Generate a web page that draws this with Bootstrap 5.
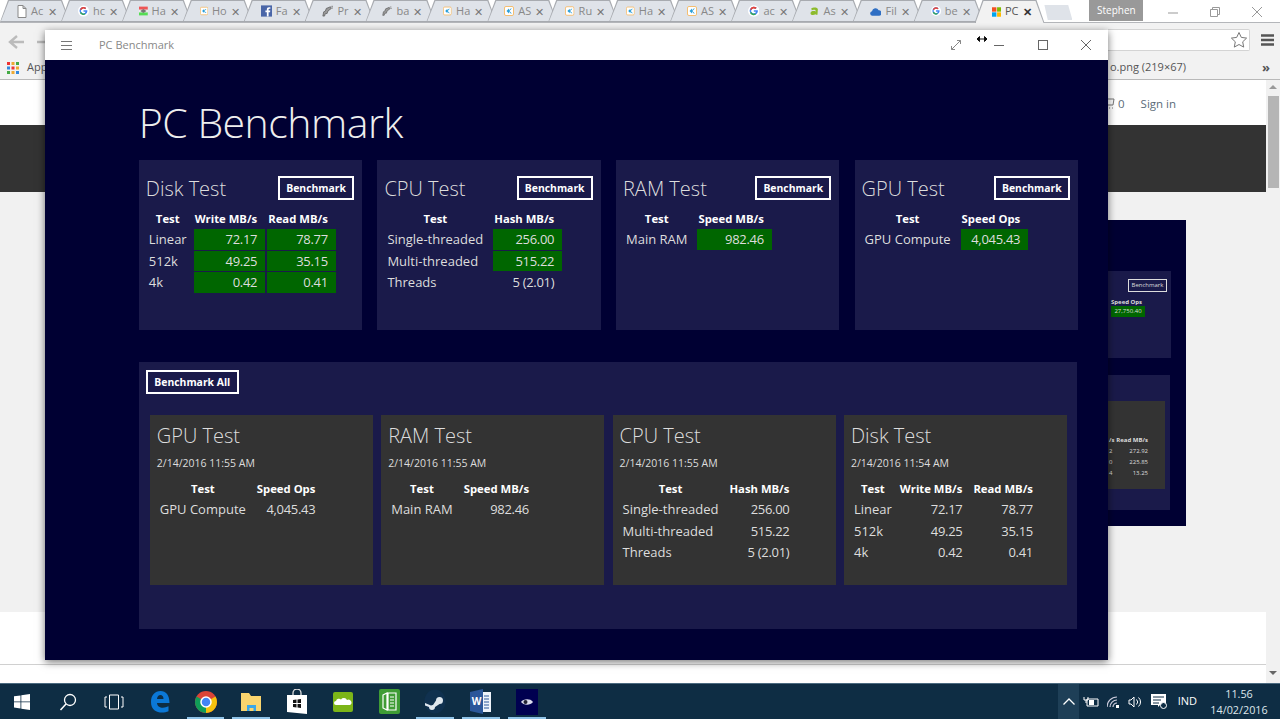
<!DOCTYPE html>
<html lang="en">
<head>
<meta charset="UTF-8">
<title>PC Benchmark</title>
<link href="https://cdn.jsdelivr.net/npm/bootstrap@5.3.3/dist/css/bootstrap.min.css" rel="stylesheet">
<style>
  html, body { height: 100%; margin: 0; overflow: hidden; background: #fff; font-family: "Open Sans", "Noto Sans", sans-serif; }
  .desk { width: 1280px; height: 719px; position: relative; overflow: hidden; }

  /* browser behind */
  .tabstrip { height: 23px; background: #fff; border-bottom: 1px solid #b4b6ba; }
  .tabby { width: 70px; margin-right: -9.1px; height: 22px; flex: none; position: relative; z-index: 0; background: #a8abb0; clip-path: polygon(8px 0, calc(100% - 8px) 0, 100% 100%, 0 100%); padding: 0 13px 0 17px; color: #888; font-size: 11px; gap: 4px; }
  .tabby::before { content: ""; position: absolute; inset: 1px 1px 1px 1px; z-index: -1; background: #dfe3e9; clip-path: polygon(8px 0, calc(100% - 8px) 0, 100% 100%, 0 100%); }
  .tabby .shut { font-size: 11px; line-height: 1; color: #777; margin-left: auto; }
  .tabby.on { color: #555; height: 23px; z-index: 1; }
  .tabby.on::before { background: #f2f2f2; bottom: 0; }
  .tabby.on .shut { color: #333; font-weight: 700; }
  .newtab { width: 28px; height: 15px; margin-left: 9px; margin-top: 5px; flex: none; background: #dfe3e9; clip-path: polygon(0 0, 85% 0, 100% 100%, 12% 100%); }
  .who { width: 54px; height: 21px; flex: none; background: #999; color: #fff; font-size: 10px; margin-left: 17px; }
  .winbtns { margin-left: auto; padding: 7px 2px 0 0; }
  .winbtns svg { display: block; margin: 0 16px; }
  .tools { height: 33px; background: #f2f2f2; padding: 0 0 0 1108px; }
  .omni { width: 142px; height: 22px; background: #fff; border: 1px solid #d4d4d4; border-left: 0; border-radius: 0 2px 2px 0; justify-content: flex-end; padding-right: 1px; }
  .omnimenu { margin-left: 11px; }
  .marks { height: 24px; background: #f2f2f2; border-bottom: 1px solid #b9b9b9; font-size: 11px; color: #555; padding-left: 7px; }
  .marks .dimtxt { margin-left: auto; margin-right: 76px; }
  .marks .more { margin-right: 10px; font-weight: 700; font-size: 13px; }
  .gopher { position: absolute; left: 0; top: 28px; padding-left: 3px; color: #ccc; }
  .pagearea { flex: 1; position: relative; background: #fff; }
  .pagetop { height: 45px; font-size: 11.5px; color: #5a6b78; padding: 3px 0 0 1107px; }
  .pagetop svg { margin-right: 3px; }
  .pagetop span + span { margin-left: 16px; }
  .pageband { height: 67px; background: #333; }
  .pagebody { height: 420px; background: #f1f1f1; }
  .pagefoot { height: 53px; background: #fff; border-bottom: 1px solid #d0d0d0; }
  .scroller { position: absolute; right: 0; top: 0; bottom: 0; width: 14px; background: #f1f1f1; }
  .scroller i { display: block; position: absolute; left: 2px; right: 1px; top: 16px; height: 92px; background: #b5b5b5; }
  .scroller b { position: absolute; left: 3px; border: 4px solid transparent; }
  .scroller .sup { top: 1px; border-bottom-color: #999; }
  .scroller .sdn { bottom: 4px; border-top-color: #666; }
  .thumbshot { position: absolute; left: 1050px; top: 140px; width: 136px; height: 306px; background: #003; color: #ddd; font-size: 6px; font-weight: 700; }
  .thumbshot .p1 { position: absolute; left: 0; top: 51px; width: 121px; height: 87px; background: #1a1a4a; }
  .thumbshot .p2 { position: absolute; left: 0; top: 155px; width: 120px; height: 135px; background: #1a1a4a; }
  .thumbshot .p3 { position: absolute; left: 0; top: 181px; width: 115px; height: 88px; background: #333; }
  .thumbshot .tb { position: absolute; left: 78px; top: 59px; width: 39px; height: 13px; border: 1px solid #ddd; text-align: center; line-height: 11px; font-weight: 400; }
  .thumbshot .sp { position: absolute; left: 61px; top: 78px; }
  .thumbshot .gr { position: absolute; left: 61px; top: 86px; width: 34px; height: 11px; line-height: 11px; background: #060; text-align: center; font-weight: 400; }
  .thumbshot .rd { position: absolute; top: 215px; right: 38px; text-align: right; line-height: 11px; font-weight: 400; }
  .thumbshot .rd b { display: block; }
  .thumbshot .rl { position: absolute; top: 215px; left: 59px; line-height: 11px; font-weight: 400; }

  /* taskbar */
  .taskbar { height: 36px; background: #0e2d44; border-top: 1px solid #4b6a80; color: #fff; position: relative; }
  .tskico { width: 45.9px; height: 35px; flex: none; position: relative; }
  .tskico:first-child { margin-left: -1px; }
  .tskico.live::after { content: ""; position: absolute; left: 4px; right: 4px; bottom: 0; height: 2px; background: #8fc3e8; }
  .tray { margin-left: auto; font-size: 11px; padding-right: 11px; }
  .tray svg { margin-left: 7.5px; flex: none; }
  .trayup { width: 21px; height: 35px; background: #1e3f57; margin-right: -3.500px; }
  .trayup svg { margin-left: 0; }
  .trayind { margin-left: 11px; }
  .clock { width: 60px; font-size: 10.8px; line-height: 16px; text-align: center; color: #dfe6eb; margin-left: 12px; }

  /* app window */
  .appwin { position: absolute; left: 45px; top: 30px; width: 1063px; height: 630px; box-shadow: 0 2px 8px rgba(0,0,0,.55); background: #003; }
  .appbar { height: 30px; background: #fff; color: #888; font-size: 11px; position: relative; }
  .burger { margin-left: 16px; margin-right: 27px; }
  .appctl { margin-left: auto; }
  .appctl .gapa { margin-left: 33px; }
  .appctl .gapb { margin-left: 34px; }
  .appctl .gapc { margin-left: 33px; margin-right: 17px; }
  .resizecur { position: absolute; left: 932px; top: 4px; }
  .appbody { padding: 37px 0 0 93.8px; height: 600px; color: #ddd; }
  .apphead { font-size: 41px; font-weight: 300; line-height: 50px; margin: 0 0 13px; color: #eee; letter-spacing: -.5px; }
  .quad { display: grid; }
  .toprow { grid-template-columns: repeat(4, 223.3px); column-gap: 15.3px; }
  .lowrow { grid-template-columns: repeat(4, 223px); column-gap: 8.4px; margin-left: 4px; margin-top: 21px; }
  .tile { height: 170px; background: #1a1a4a; padding: 16px 8px 0 7px; }
  .tile.gray { background: #333; padding-top: 8px; }
  .tilehd { font-size: 20px; font-weight: 300; line-height: 26px; margin: 0; color: #ddd; }
  .stamp { font-size: 10.5px; line-height: 16px; margin-top: 6px; color: #ddd; }
  .btnbench { display: block; border: 2px solid #fff; border-radius: 0; color: #fff; background: transparent; font-size: 10.4px; font-weight: 700; line-height: 20px; padding: 0 6px; width: 76px; white-space: nowrap; }
  .allwrap { width: 938px; height: 267px; background: #1a1a4a; margin-top: 32px; padding: 8px 0 0 7px; }
  .allwrap .btnbench { width: 93px; }
  .benchtbl { border-collapse: separate; border-spacing: 2px 1px; margin: 6px 0 0 -1px; font-size: 13px; line-height: 20.5px; color: #ddd; }
  .gray .benchtbl { margin-top: 7px; }
  .benchtbl th { font-size: 11.3px; font-weight: 700; color: #fff; text-align: center; line-height: 19px; padding: 0 8px 0 1px; white-space: nowrap; }
  .benchtbl td { padding: 0 8px 0 1px; white-space: nowrap; }
  .benchtbl th:first-child, .benchtbl td:first-child { padding-left: 2px; }
  .benchtbl.disktbl th:first-child, .benchtbl.disktbl td:first-child { padding-right: 5px; }
  .benchtbl td.num { text-align: right; letter-spacing: -.3px; }
  .benchtbl td.ok { background: #060; }
</style>
</head>
<body>
<svg width="0" height="0" class="position-absolute">
  <symbol id="kico" viewBox="0 0 14 14"><rect x=".7" y=".7" width="12.6" height="12.6" rx="2" fill="#fff" stroke="#f5b55a" stroke-width="1.2"/><path d="M7 3.500 3.500 7 7 10.500V8l2.500 2.500h1.500L7.500 7 11 3.500H9.500L7 6z" fill="#2a9fd8"/></symbol>
  <symbol id="gico" viewBox="0 0 14 14"><circle cx="7" cy="7" r="7" fill="#fff"/><path d="M11.800 6H7v2h2.700A3 3 0 1 1 9 4.700l1.500-1.500A5 5 0 1 0 12 7z" fill="#4285f4"/><path d="M2.500 4.800A5 5 0 0 1 10.500 3.200L9 4.700A3 3 0 0 0 4.300 5.700z" fill="#ea4335"/><path d="M2.300 9.200A5 5 0 0 0 9.500 11.300L8.500 9.800A3 3 0 0 1 4.300 8.500z" fill="#34a853"/></symbol>
  <symbol id="wico" viewBox="0 0 14 14"><path d="M1 13l1-5 2-1 1-3 5-2 1 2-4 3-1 3H4l-1 3z" fill="#999" stroke="#555" stroke-width=".8"/><path d="M11 1.500h2M11.500 3.500h2" stroke="#777"/></symbol>
</svg>
<div class="desk d-flex flex-column">
  <div class="tabstrip d-flex align-items-start">
    <div class="tabby d-flex align-items-center"><svg width="10" height="13" viewBox="0 0 10 13"><path d="M1 .5h5l3 3v9H1zM6 .5v3h3" fill="#fff" stroke="#888"/></svg><span>Ac</span><span class="shut">✕</span></div>
    <div class="tabby d-flex align-items-center"><svg width="14" height="14"><use href="#gico"/></svg><span>hc</span><span class="shut">✕</span></div>
    <div class="tabby d-flex align-items-center"><svg width="14" height="14" viewBox="0 0 14 14"><rect width="14" height="5" fill="#e55"/><rect y="9" width="14" height="5" fill="#5d5"/><rect y="5" width="14" height="4" fill="#eee"/><path d="M2 7l5-3 5 3-5 3z" fill="#777"/></svg><span>Ha</span><span class="shut">✕</span></div>
    <div class="tabby d-flex align-items-center"><svg width="14" height="14"><use href="#kico"/></svg><span>Ho</span><span class="shut">✕</span></div>
    <div class="tabby d-flex align-items-center"><svg width="14" height="14" viewBox="0 0 14 14"><rect width="14" height="14" fill="#4a66a8"/><path d="M9.500 14V8.500h1.800l.3-2H9.500V5.200c0-.6.2-1 1-1h1.200V2.400H10C8.200 2.400 7.300 3.400 7.300 5v1.500H5.500v2h1.800V14z" fill="#fff"/></svg><span>Fa</span><span class="shut">✕</span></div>
    <div class="tabby d-flex align-items-center"><svg width="14" height="14"><use href="#wico"/></svg><span>Pr</span><span class="shut">✕</span></div>
    <div class="tabby d-flex align-items-center"><svg width="14" height="14"><use href="#wico"/></svg><span>ba</span><span class="shut">✕</span></div>
    <div class="tabby d-flex align-items-center"><svg width="14" height="14"><use href="#kico"/></svg><span>Ha</span><span class="shut">✕</span></div>
    <div class="tabby d-flex align-items-center"><svg width="14" height="14"><use href="#kico"/></svg><span>AS</span><span class="shut">✕</span></div>
    <div class="tabby d-flex align-items-center"><svg width="14" height="14"><use href="#kico"/></svg><span>Ru</span><span class="shut">✕</span></div>
    <div class="tabby d-flex align-items-center"><svg width="14" height="14"><use href="#kico"/></svg><span>Ha</span><span class="shut">✕</span></div>
    <div class="tabby d-flex align-items-center"><svg width="14" height="14"><use href="#kico"/></svg><span>AS</span><span class="shut">✕</span></div>
    <div class="tabby d-flex align-items-center"><svg width="14" height="14"><use href="#gico"/></svg><span>ac</span><span class="shut">✕</span></div>
    <div class="tabby d-flex align-items-center"><svg width="14" height="14" viewBox="0 0 14 14"><path d="M3 3.500c2-1.500 8-2 8.500 1L11 12H8.500l.2-1C6 13 1.500 12.500 2 9.500 2.500 6.500 6.500 7 9 7.500 9 4.500 5 5 3.500 6z" fill="#8dbb2c"/></svg><span>As</span><span class="shut">✕</span></div>
    <div class="tabby d-flex align-items-center"><svg width="15" height="11" viewBox="0 0 15 11"><path d="M3 11a3 3 0 0 1-.5-5.900A4.500 4.500 0 0 1 11 4a3.500 3.500 0 0 1 .5 7z" fill="#2f6fc4"/></svg><span>Fil</span><span class="shut">✕</span></div>
    <div class="tabby d-flex align-items-center"><svg width="14" height="14"><use href="#gico"/></svg><span>be</span><span class="shut">✕</span></div>
    <div class="tabby on d-flex align-items-center"><svg width="14" height="14" viewBox="0 0 14 14"><rect width="6.500" height="6.500" fill="#f25022"/><rect x="7.500" width="6.500" height="6.500" fill="#7fba00"/><rect y="7.500" width="6.500" height="6.500" fill="#00a4ef"/><rect x="7.500" y="7.500" width="6.500" height="6.500" fill="#ffb900"/></svg><span>PC</span><span class="shut">✕</span></div>
    <div class="newtab"></div>
    <div class="who d-flex align-items-center justify-content-center">Stephen</div>
    <div class="winbtns d-flex align-items-center">
      <svg width="10" height="10" viewBox="0 0 10 10"><path d="M0 6h10" stroke="#999"/></svg>
      <svg width="10" height="10" viewBox="0 0 10 10"><path d="M.5 2.500h7v7h-7zM2.500 2.500v-2h7v7h-2" fill="none" stroke="#999"/></svg>
      <svg width="10" height="10" viewBox="0 0 10 10"><path d="M0 0l10 10M10 0L0 10" stroke="#999"/></svg>
    </div>
  </div>
  <div class="tools d-flex align-items-center">
    <div class="omni d-flex align-items-center"><svg width="18" height="18" viewBox="0 0 18 18"><path d="M9 1.500l2.300 4.900 5.300.7-3.900 3.700 1 5.300L9 13.500l-4.700 2.600 1-5.300L1.400 7.100l5.300-.7z" fill="#fff" stroke="#777"/></svg></div>
    <svg class="omnimenu" width="13" height="12" viewBox="0 0 13 12"><path d="M0 1.500h13M0 6h13M0 10.500h13" stroke="#555" stroke-width="2.400"/></svg>
  </div>
  <div class="marks d-flex align-items-center">
    <svg width="12" height="12" viewBox="0 0 12 12" class="me-2"><rect width="3" height="3" fill="#e33"/><rect x="4.500" width="3" height="3" fill="#ea3"/><rect x="9" width="3" height="3" fill="#4a4"/><rect y="4.500" width="3" height="3" fill="#38d"/><rect x="4.500" y="4.500" width="3" height="3" fill="#e33"/><rect x="9" y="4.500" width="3" height="3" fill="#ea3"/><rect y="9" width="3" height="3" fill="#4a4"/><rect x="4.500" y="9" width="3" height="3" fill="#ea3"/><rect x="9" y="9" width="3" height="3" fill="#38d"/></svg>
    <span>Apps</span>
    <span class="dimtxt">o.png (219×67)</span><span class="more">»</span>
  </div>
  <div class="gopher"><svg width="46" height="20" viewBox="0 0 46 20"><path d="M14 4L7 10l7 6M7 10h14" fill="none" stroke="#bbb" stroke-width="2.400"/><path d="M34 10h8" stroke="#bbb" stroke-width="2.400"/></svg></div>
  <div class="pagearea">
    <div class="pagetop d-flex align-items-center"><svg width="8" height="12" viewBox="0 0 8 12"><path d="M0 1h7L6 7H1M2 10h1M5 10h1" fill="none" stroke="#777"/></svg><span>0</span><span>Sign in</span></div>
    <div class="pageband"></div>
    <div class="pagebody"></div>
    <div class="pagefoot"></div>
    <div class="thumbshot">
      <div class="p1"></div><div class="p2"></div><div class="p3"></div>
      <div class="tb">Benchmark</div>
      <div class="sp">Speed Ops</div>
      <div class="gr">27,750.40</div>
      <div class="rl"><b>/s</b><br>2<br>0<br>4</div>
      <div class="rd"><b>Read MB/s</b>272.92<br>225.85<br>13.25</div>
    </div>
    <div class="scroller"><b class="sup"></b><i></i><b class="sdn"></b></div>
  </div>
  <div class="taskbar d-flex align-items-center">
    <div class="tskico d-flex align-items-center justify-content-center"><svg width="16" height="16" viewBox="0 0 16 16"><path d="M0 2.300l6.500-.9V7.500H0zM7.300 1.300L16 0v7.500H7.300zM0 8.300h6.500v6.200L0 13.600zM7.300 8.300H16V16l-8.700-1.300z" fill="#fff"/></svg></div>
    <div class="tskico d-flex align-items-center justify-content-center"><svg width="18" height="18" viewBox="0 0 18 18"><circle cx="11" cy="7" r="5.500" fill="none" stroke="#fff" stroke-width="1.300"/><path d="M7 11l-5.500 6" stroke="#fff" stroke-width="1.500"/></svg></div>
    <div class="tskico d-flex align-items-center justify-content-center"><svg width="20" height="16" viewBox="0 0 20 16"><path d="M5.500 1h9v14h-9zM3 3H1v10h2M17 3h2v10h-2" fill="none" stroke="#fff"/></svg></div>
    <div class="tskico d-flex align-items-center justify-content-center"><svg width="20" height="24" viewBox="0 0 20 24"><path d="M1 12C1 5 5 1 10.500 1 16 1 19.500 5 19.500 13H7c.2 5 6.500 6 11.500 3.300v5C12 24 1 23 1 12zm6-3h6.500C13.500 6 12 5 10.500 5 8.500 5 7.300 6.500 7 9z" fill="#0b78d7"/></svg></div>
    <div class="tskico live d-flex align-items-center justify-content-center"><svg width="22" height="22" viewBox="0 0 22 22"><circle cx="11" cy="11" r="11" fill="#db4437"/><path d="M11 11L20.500 5.500A11 11 0 0 1 11 22z" fill="#f4c20d"/><path d="M11 11L11 22A11 11 0 0 1 1.500 5.500z" fill="#0f9d58"/><circle cx="11" cy="11" r="5" fill="#4285f4" stroke="#fff" stroke-width="1.500"/></svg></div>
    <div class="tskico live d-flex align-items-center justify-content-center"><svg width="22" height="20" viewBox="0 0 22 20"><path d="M1 1h8l2 3h10v15H1z" fill="#f9d56e"/><path d="M7 13h9v6h-2.500v-3h-4v3H7z" fill="#3aa7e8"/></svg></div>
    <div class="tskico d-flex align-items-center justify-content-center"><svg width="20" height="25" viewBox="0 0 20 25"><path d="M6 7V4a4 4 0 0 1 8 0v3" fill="none" stroke="#ddd" stroke-width="1.300"/><path d="M0 6h20v19L0 23z" fill="#fff"/><path d="M6 11l3.500-.5v3.500H6zM10.500 10.400l3.500-.4v4h-3.500zM6 15h3.500v3.500L6 18zM10.500 15H14v4l-3.500-.4z" fill="#111"/></svg></div>
    <div class="tskico d-flex align-items-center justify-content-center"><svg width="20" height="20" viewBox="0 0 20 20"><rect width="20" height="20" rx="2" fill="#7cb518"/><path d="M3 13a2 2 0 0 1 0-4 3 3 0 0 1 5-1.500 3.500 3.500 0 0 1 6 .5 2.500 2.500 0 0 1 3 5z" fill="#fff"/></svg></div>
    <div class="tskico d-flex align-items-center justify-content-center"><svg width="21" height="25" viewBox="0 0 21 25"><rect width="21" height="25" rx="2" fill="#3f9c35"/><path d="M4 6l4-2v17l-4-2zM9 4h8v17H9zM11 8h4M11 11h4M11 14h4M11 17h4" fill="none" stroke="#fff" stroke-width="1.200"/></svg></div>
    <div class="tskico live d-flex align-items-center justify-content-center"><svg width="22" height="25" viewBox="0 0 22 25"><ellipse cx="11" cy="12.500" rx="10.500" ry="12" fill="#10314f"/><path d="M1 14l6 2.500a3 3 0 0 1 2-.5l3-4.500a3.500 3.500 0 1 1 3.500 3.500L11 18a3 3 0 0 1-6 0l-4-1.500z" fill="#dfe7ee"/></svg></div>
    <div class="tskico live d-flex align-items-center justify-content-center"><svg width="22" height="25" viewBox="0 0 22 25"><path d="M11 3h10v20H11z" fill="#eef3fa"/><path d="M14 7h5M14 10h5M14 13h5M14 16h5M14 19h5" stroke="#2b579a"/><path d="M0 3l13-3v25L0 22z" fill="#2b579a"/><text x="6.500" y="16" font-size="10" font-weight="700" text-anchor="middle" fill="#fff">W</text></svg></div>
    <div class="tskico live d-flex align-items-center justify-content-center"><svg width="22" height="26" viewBox="0 0 22 26"><rect width="22" height="26" fill="#000050"/><path d="M5 13c2-3 9-4 12 0-3 4-10 3-12 0z" fill="#dde"/><circle cx="9.500" cy="13" r="2" fill="#223"/></svg></div>
    <div class="tray d-flex align-items-center">
      <div class="trayup d-flex align-items-center justify-content-center"><svg width="12" height="7" viewBox="0 0 12 7"><path d="M.5 6.500L6 1l5.500 5.500" fill="none" stroke="#fff" stroke-width="1.300"/></svg></div>
      <svg width="16" height="12" viewBox="0 0 16 12"><path d="M4 3h11v7H4zM1 1v3h4V1M3 4v3" fill="none" stroke="#fff"/><rect x="6" y="4" width="5" height="5" fill="#fff"/></svg>
      <svg width="14" height="12" viewBox="0 0 14 12"><path d="M0 11A10 10 0 0 1 10 1M3 11a7 7 0 0 1 7-7M6 11a4 4 0 0 1 4-4" fill="none" stroke="#ccd" stroke-width="1.200"/><rect x="9" y="9" width="3" height="3" fill="#fff"/></svg>
      <svg width="15" height="12" viewBox="0 0 15 12"><path d="M1 4h2l3-3v10L3 8H1zM8.500 3.500a3.500 3.500 0 0 1 0 5M10.500 1.500a6 6 0 0 1 0 9" fill="none" stroke="#fff"/></svg>
      <svg width="16" height="15" viewBox="0 0 16 15"><path d="M0 0h15v11H9l-2 2v-2H0z" fill="#fff"/><path d="M2 3h11M2 6h8M2 9h6" stroke="#0e2d44"/><circle cx="12.500" cy="11.500" r="3" fill="#0e2d44" stroke="#fff"/></svg>
      <span class="trayind">IND</span>
      <div class="clock">11.56<br>14/02/2016</div>
    </div>
  </div>

  <div class="appwin">
    <div class="appbar d-flex align-items-center">
      <svg class="burger" width="11" height="9" viewBox="0 0 11 9"><path d="M0 .5h11M0 4.500h11M0 8.500h11" stroke="#777"/></svg>
      <span>PC Benchmark</span>
      <div class="appctl d-flex align-items-center">
        <svg width="10" height="10" viewBox="0 0 10 10"><path d="M.5 9.500l9-9M6 .5h3.500V4M.5 6v3.500H4" fill="none" stroke="#888"/></svg>
        <svg class="gapa" width="10" height="10" viewBox="0 0 10 10"><path d="M0 5.500h10" stroke="#666"/></svg>
        <svg class="gapb" width="10" height="10" viewBox="0 0 10 10"><rect x=".5" y=".5" width="9" height="9" fill="none" stroke="#666"/></svg>
        <svg class="gapc" width="10" height="10" viewBox="0 0 10 10"><path d="M0 0l10 10M10 0L0 10" stroke="#666"/></svg>
      </div>
      <svg class="resizecur" width="10" height="10" viewBox="0 0 10 10"><path d="M0 5h10M0 5l2.500-2.500v5zM10 5L7.500 2.500v5z" stroke="#111"/></svg>
    </div>
    <div class="appbody">
      <h1 class="apphead">PC Benchmark</h1>
      <div class="quad toprow">
        <div class="tile">
          <div class="d-flex justify-content-between align-items-start"><h2 class="tilehd">Disk Test</h2><button class="btn btnbench">Benchmark</button></div>
          <table class="benchtbl disktbl">
            <tr><th>Test</th><th>Write MB/s</th><th>Read MB/s</th></tr>
            <tr><td>Linear</td><td class="num ok">72.17</td><td class="num ok">78.77</td></tr>
            <tr><td>512k</td><td class="num ok">49.25</td><td class="num ok">35.15</td></tr>
            <tr><td>4k</td><td class="num ok">0.42</td><td class="num ok">0.41</td></tr>
          </table>
        </div>
        <div class="tile">
          <div class="d-flex justify-content-between align-items-start"><h2 class="tilehd">CPU Test</h2><button class="btn btnbench">Benchmark</button></div>
          <table class="benchtbl">
            <tr><th>Test</th><th>Hash MB/s</th></tr>
            <tr><td>Single-threaded</td><td class="num ok">256.00</td></tr>
            <tr><td>Multi-threaded</td><td class="num ok">515.22</td></tr>
            <tr><td>Threads</td><td class="num">5 (2.01)</td></tr>
          </table>
        </div>
        <div class="tile">
          <div class="d-flex justify-content-between align-items-start"><h2 class="tilehd">RAM Test</h2><button class="btn btnbench">Benchmark</button></div>
          <table class="benchtbl">
            <tr><th>Test</th><th>Speed MB/s</th></tr>
            <tr><td>Main RAM</td><td class="num ok">982.46</td></tr>
          </table>
        </div>
        <div class="tile">
          <div class="d-flex justify-content-between align-items-start"><h2 class="tilehd">GPU Test</h2><button class="btn btnbench">Benchmark</button></div>
          <table class="benchtbl">
            <tr><th>Test</th><th>Speed Ops</th></tr>
            <tr><td>GPU Compute</td><td class="num ok">4,045.43</td></tr>
          </table>
        </div>
      </div>
      <div class="allwrap">
        <button class="btn btnbench">Benchmark All</button>
        <div class="quad lowrow">
          <div class="tile gray">
            <h2 class="tilehd">GPU Test</h2>
            <div class="stamp">2/14/2016 11:55 AM</div>
            <table class="benchtbl">
              <tr><th>Test</th><th>Speed Ops</th></tr>
              <tr><td>GPU Compute</td><td class="num">4,045.43</td></tr>
            </table>
          </div>
          <div class="tile gray">
            <h2 class="tilehd">RAM Test</h2>
            <div class="stamp">2/14/2016 11:55 AM</div>
            <table class="benchtbl">
              <tr><th>Test</th><th>Speed MB/s</th></tr>
              <tr><td>Main RAM</td><td class="num">982.46</td></tr>
            </table>
          </div>
          <div class="tile gray">
            <h2 class="tilehd">CPU Test</h2>
            <div class="stamp">2/14/2016 11:55 AM</div>
            <table class="benchtbl">
              <tr><th>Test</th><th>Hash MB/s</th></tr>
              <tr><td>Single-threaded</td><td class="num">256.00</td></tr>
              <tr><td>Multi-threaded</td><td class="num">515.22</td></tr>
              <tr><td>Threads</td><td class="num">5 (2.01)</td></tr>
            </table>
          </div>
          <div class="tile gray">
            <h2 class="tilehd">Disk Test</h2>
            <div class="stamp">2/14/2016 11:54 AM</div>
            <table class="benchtbl disktbl">
              <tr><th>Test</th><th>Write MB/s</th><th>Read MB/s</th></tr>
              <tr><td>Linear</td><td class="num">72.17</td><td class="num">78.77</td></tr>
              <tr><td>512k</td><td class="num">49.25</td><td class="num">35.15</td></tr>
              <tr><td>4k</td><td class="num">0.42</td><td class="num">0.41</td></tr>
            </table>
          </div>
        </div>
      </div>
    </div>
  </div>
</div>
<script src="https://cdn.jsdelivr.net/npm/bootstrap@5.3.3/dist/js/bootstrap.bundle.min.js"></script>
</body>
</html>
